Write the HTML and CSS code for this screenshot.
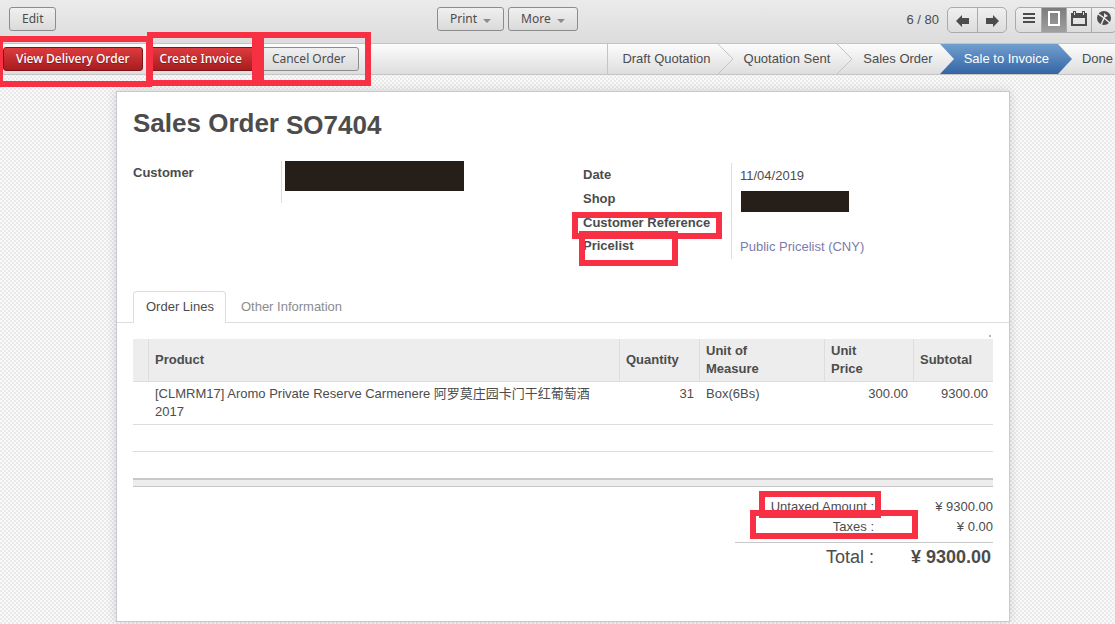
FILE: index.html
```html
<!DOCTYPE html>
<html lang="en">
<head>
<meta charset="utf-8">
<title>Sales Order SO7404</title>
<link rel="stylesheet" href="styles.css">
</head>
<body>
<header class="toolbar">
  <div class="toolbar-left"><button class="btn" type="button">Edit</button></div>
  <div class="toolbar-menus">
    <button class="btn" type="button">Print <span class="caret"></span></button>
    <button class="btn" type="button">More <span class="caret"></span></button>
  </div>
  <div class="toolbar-right">
    <span class="pager-count">6 / 80</span>
    <div class="group">
      <button class="group-btn wide" type="button" aria-label="Previous"><svg width="14" height="12" viewBox="0 0 14 12"><path d="M0 6 6 0V3H13V9H6V12Z" fill="#4c4c4c"/></svg></button>
      <button class="group-btn wide" type="button" aria-label="Next"><svg width="14" height="12" viewBox="0 0 14 12"><path d="M14 6 8 0V3H1V9H8V12Z" fill="#4c4c4c"/></svg></button>
    </div>
    <div class="group views">
      <button class="group-btn" type="button" aria-label="List"><svg width="14" height="16" viewBox="0 0 14 16"><path d="M1 2H13V4H1ZM1 6H13V8H1ZM1 10H13V12H1Z" fill="#4c4c4c"/></svg></button>
      <button class="group-btn selected" type="button" aria-label="Form"><svg width="14" height="16" viewBox="0 0 14 16"><rect x="2" y="1" width="10" height="13" fill="none" stroke="#fff" stroke-width="2"/></svg></button>
      <button class="group-btn" type="button" aria-label="Calendar"><svg width="16" height="16" viewBox="0 0 16 16"><path d="M0 2H2V0H5V2H11V0H14V2H16V15H0ZM2 7V13H14V7Z" fill="#4c4c4c" fill-rule="evenodd"/><path d="M3.500 1V4M12.500 1V4" stroke="#e4e4e4" fill="none"/></svg></button>
      <button class="group-btn" type="button" aria-label="Graph"><svg width="14" height="16" viewBox="0 0 14 16"><circle cx="7" cy="7" r="7" fill="#4c4c4c"/><path d="M0 2 7 7 4 14M7 7 13 12" stroke="#e8e8e8" stroke-width="1.500" fill="none"/><path d="M7 7V2L11 5Z" fill="#e8e8e8"/></svg></button>
    </div>
  </div>
</header>

<div class="statusbar">
  <div class="actions">
    <button class="btn primary" type="button">View Delivery Order</button>
    <button class="btn primary" type="button">Create Invoice</button>
    <button class="btn" type="button">Cancel Order</button>
    <span class="mark mark-delivery"></span>
    <span class="mark mark-invoice"></span>
    <span class="mark mark-cancel"></span>
  </div>
  <svg class="defs" width="0" height="0" aria-hidden="true"><defs>
    <linearGradient id="pale" x1="0" y1="0" x2="0" y2="1"><stop offset="0" stop-color="#fcfcfc"/><stop offset="1" stop-color="#dedede"/></linearGradient>
    <linearGradient id="blue" x1="0" y1="0" x2="0" y2="1"><stop offset="0" stop-color="#729fcf"/><stop offset="1" stop-color="#3465a4"/></linearGradient>
  </defs></svg>
  <ol class="steps">
    <li class="step">Draft Quotation</li>
    <li class="step"><svg class="chevron" width="16" height="30"><path d="M0 0 15 15 0 30" fill="url(#pale)" stroke="#c4c4c4"/></svg>Quotation Sent</li>
    <li class="step"><svg class="chevron" width="16" height="30"><path d="M0 0 15 15 0 30" fill="url(#pale)" stroke="#c4c4c4"/></svg>Sales Order</li>
    <li class="step active"><svg class="chevron" width="16" height="30"><path d="M0 0 14 15 0 30" fill="url(#pale)"/></svg>Sale to Invoice</li>
    <li class="step"><svg class="chevron" width="16" height="30"><path d="M0 0 14 15 0 30" fill="url(#blue)"/></svg>Done</li>
  </ol>
</div>

<main class="sheet">
  <h1 class="title"><span>Sales Order</span> <span class="number">SO7404</span></h1>

  <div class="form">
    <dl class="fields customer">
      <dt>Customer</dt><dd><span class="redacted large"></span></dd>
    </dl>
    <dl class="fields details">
      <dt>Date</dt><dd>11/04/2019</dd>
      <dt>Shop</dt><dd><span class="redacted"></span></dd>
      <dt>Customer Reference<span class="mark mark-reference"></span></dt><dd></dd>
      <dt>Pricelist<span class="mark mark-pricelist"></span></dt><dd><a href="#">Public Pricelist (CNY)</a></dd>
    </dl>
  </div>

  <nav class="tabs">
    <a class="tab current" href="#">Order Lines</a>
    <a class="tab" href="#">Other Information</a>
  </nav>

  <div class="lines-wrap">
    <span class="dot"></span>
    <table class="lines">
      <colgroup><col class="c-handle"><col><col class="c-qty"><col class="c-uom"><col class="c-price"><col class="c-sub"></colgroup>
      <thead>
        <tr><th></th><th>Product</th><th>Quantity</th><th>Unit of<br>Measure</th><th>Unit<br>Price</th><th>Subtotal</th></tr>
      </thead>
      <tbody>
        <tr><td></td><td>[CLMRM17] Aromo Private Reserve Carmenere 阿罗莫庄园卡门干红葡萄酒 2017</td><td class="num">31</td><td>Box(6Bs)</td><td class="num">300.00</td><td class="num">9300.00</td></tr>
        <tr class="blank"><td colspan="6"></td></tr>
        <tr class="blank last"><td colspan="6"></td></tr>
      </tbody>
      <tfoot><tr><td colspan="6"></td></tr></tfoot>
    </table>
  </div>

  <dl class="totals">
    <dt>Untaxed Amount :<span class="mark mark-untaxed"></span></dt><dd>¥ 9300.00</dd>
    <dt>Taxes :<span class="mark mark-taxes"></span></dt><dd>¥ 0.00</dd>
    <dt class="grand">Total :</dt><dd class="grand">¥ 9300.00</dd>
  </dl>
</main>
</body>
</html>
```
FILE: styles.css
```css
* { box-sizing: border-box; }

body {
  margin: 0;
  min-height: 100vh;
  overflow: hidden;
  color: #4c4c4c;
  font: 13px/18px "Liberation Sans", Arial, "Noto Sans CJK SC", sans-serif;
  background: repeating-conic-gradient(#e9e9e9 0 25%, #fafafa 0 50%) 0 0 / 4px 4px;
}

a { color: #7c7bad; text-decoration: none; }
dl, dd, ol { margin: 0; padding: 0; }

/* Toolbar */
.toolbar {
  display: grid;
  grid-template-columns: 428px auto 1fr;
  align-items: start;
  height: 44px;
  padding: 7px 0 0 9px;
  border-bottom: 1px solid #c4c4c4;
  background: linear-gradient(#ebebeb, #dcdcdc);
}
.toolbar-left, .toolbar-menus { display: flex; gap: 4px; }
.toolbar-right { display: flex; justify-content: flex-end; }
.pager-count { padding: 4px 8px 0 0; }

.btn {
  display: flex;
  align-items: center;
  height: 24px;
  padding: 0 12px;
  border: 1px solid #8c8c8c;
  border-radius: 3px;
  color: #4c4c4c;
  font: 12px/18px "Noto Sans", "Open Sans", sans-serif;
  white-space: nowrap;
  background: linear-gradient(#f0f0f0, #dadada);
}
.primary {
  border-color: #7e1416;
  color: #fff;
  font-weight: 500;
  text-shadow: 0 1px 1px rgba(0, 0, 0, .3);
  background: linear-gradient(#dc3c3e, #a81c20);
}
.caret {
  margin: 3px 0 0 6px;
  border: 4px solid transparent;
  border-top-color: #8c8c8c;
  border-bottom: 0;
}

.group {
  display: flex;
  height: 26px;
  border: 1px solid #ababab;
  border-radius: 5px;
  overflow: hidden;
  background: linear-gradient(#f0f0f0, #dcdcdc);
}
.views { margin: 0 -2px 0 8px; }
.group-btn {
  display: flex;
  align-items: center;
  justify-content: center;
  width: 25px;
  padding: 0 0 2px;
  border: 0;
  border-left: 1px solid #ababab;
  background: none;
}
.group-btn:first-child { border-left: 0; }
.wide { width: 29px; padding: 2px 0 0; }
.selected { background: linear-gradient(#7c7c7c, #a0a0a0); }

/* Status bar */
.statusbar {
  display: flex;
  justify-content: space-between;
  height: 31px;
  border-bottom: 1px solid #c4c4c4;
  background: linear-gradient(#fcfcfc, #dedede);
}
.actions {
  position: relative;
  display: flex;
  gap: 4px;
  padding: 3px 0 0 3px;
}
.defs { position: absolute; }
.steps {
  display: flex;
  border-left: 1px solid #c4c4c4;
  list-style: none;
}
.step {
  position: relative;
  padding: 6px 7px 6px 26px;
  white-space: nowrap;
}
.step:first-child { padding-left: 14px; }
.step:last-child { padding: 6px 2px 6px 24px; }
.step.active {
  padding: 6px 9px 6px 24px;
  color: #fff;
  background: linear-gradient(#729fcf, #3465a4);
}
.chevron { position: absolute; top: 0; left: 0; }

/* Sheet */
.sheet {
  min-height: 531px;
  margin: 16px 105px 0 116px;
  padding: 16px;
  border: 1px solid #c8c8d3;
  background: #fff;
  box-shadow: 0 0 10px rgba(0, 0, 0, .15);
}
.title {
  display: flex;
  gap: 7px;
  margin: 0;
  font-size: 26px;
  line-height: 30px;
}
.number { padding-top: 2px; }

.form {
  display: grid;
  grid-template-columns: 450px 1fr;
  align-items: start;
  padding-top: 21px;
}
.fields {
  display: grid;
  grid-template-columns: 148px 1fr;
}
.fields dt { position: relative; font-weight: bold; }
.fields dd { border-left: 1px solid #ddd; }
.customer dt { padding-top: 3px; }
.customer dd { height: 42px; padding-left: 3px; }
.details { grid-template-rows: 24px 24px 23px 25px; padding-top: 2px; }
.details dt { padding-top: 3px; }
.details dd { padding: 4px 0 0 8px; }
.redacted {
  display: block;
  width: 108px;
  height: 21px;
  margin-left: 1px;
  background: #261e19;
}
.large { width: 179px; height: 30px; margin: 0; }

.tabs {
  display: flex;
  align-items: flex-end;
  margin: 32px -16px 0;
  padding-left: 16px;
  border-bottom: 1px solid #ddd;
}
.tab {
  margin-bottom: -1px;
  padding: 6px 14px 7px;
  border: 1px solid transparent;
  border-bottom: 0;
  color: #8c8c8c;
}
.current {
  padding-right: 11px;
  padding-left: 12px;
  border-color: #ddd;
  border-radius: 4px 4px 0 0;
  color: #4c4c4c;
  background: #fff;
}

/* Order lines */
.lines-wrap { position: relative; padding-top: 16px; }
.dot {
  position: absolute;
  top: 12px;
  right: 2px;
  width: 2px;
  height: 2px;
  background: #b4b4b4;
}
.lines {
  width: 100%;
  table-layout: fixed;
  border-collapse: separate;
  border-spacing: 0;
}
.c-handle { width: 15px; }
.c-qty { width: 80px; }
.c-uom { width: 125px; }
.c-price { width: 89px; }
.c-sub { width: 80px; }
.lines th {
  padding: 3px 6px;
  border-left: 1px solid #ddd;
  border-bottom: 1px solid #ddd;
  text-align: left;
  background: #ededed;
}
.lines th:first-child { border-left-color: #ededed; }
.lines td {
  padding: 3px 6px 3px 7px;
  border-bottom: 1px solid #ddd;
  vertical-align: top;
}
.lines td:first-child { padding: 0; }
.lines .num { padding-right: 5px; text-align: right; }
.blank td { height: 27px; }
.lines .last td { border-bottom: 2px solid #c8c8c8; height: 28px; }
.lines tfoot td { height: 7px; border-bottom: 1px solid #c8c8c8; background: #ededed; }

/* Totals */
.totals {
  display: grid;
  grid-template-columns: 1fr 119px;
  width: 258px;
  margin: 10px 0 0 auto;
  line-height: 20px;
  text-align: right;
}
.totals dt { position: relative; }
.totals .grand {
  margin-top: 5px;
  padding-top: 4px;
  border-top: 1px solid #c8c8c8;
  font-size: 18px;
}
.totals dd.grand { padding-right: 2px; font-weight: bold; }

/* Highlight frames over the annotated controls */
.mark { position: absolute; border: 6px solid #f83044; pointer-events: none; }
.mark-delivery { top: -8px; left: -3px; width: 155px; height: 51px; }
.mark-invoice { top: -12px; left: 147px; width: 111px; height: 54px; }
.mark-cancel { top: -12px; left: 258px; width: 113px; height: 54px; }
.mark-reference { top: 1px; left: -11px; width: 150px; height: 27px; }
.mark-pricelist { top: -3px; left: -4px; width: 99px; height: 35px; }
.mark-untaxed { top: -6px; right: -7px; width: 122px; height: 27px; }
.mark-taxes { top: -7px; right: -44px; width: 168px; height: 29px; }
```
